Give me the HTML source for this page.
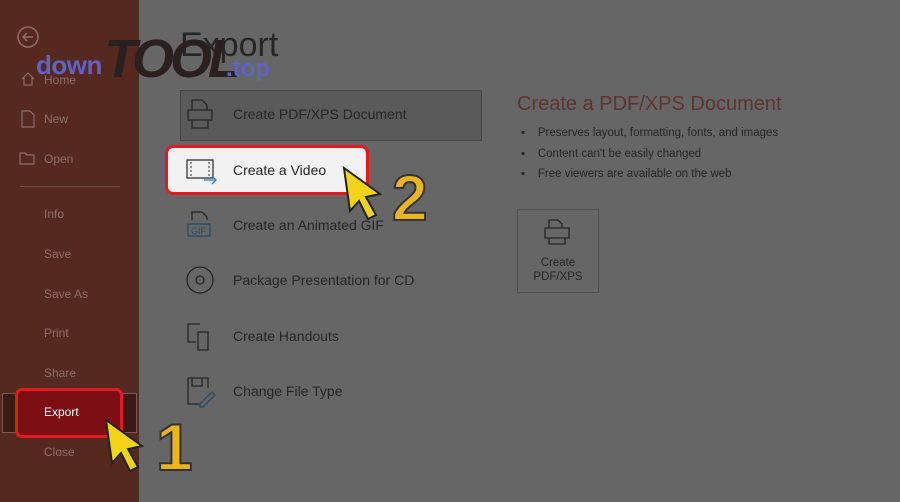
<!DOCTYPE html>
<html><head><meta charset="utf-8"><style>
*{margin:0;padding:0;box-sizing:border-box}
body{width:900px;height:502px;overflow:hidden;background:#666;font-family:"Liberation Sans",sans-serif;position:relative}
.side{position:absolute;left:0;top:0;width:139px;height:502px;background:#552920}
.si{position:absolute;left:44px;font-size:12px;color:#8f6e66}
.t{position:absolute;color:#262626;font-size:14px}
.ic{position:absolute}
</style></head><body>
<div class="side">
<svg class="ic" style="left:16px;top:25px" width="24" height="24"><circle cx="12" cy="12" r="10" fill="none" stroke="#8f6e66" stroke-width="1.5"/><path d="M17 12H7M11 8l-4 4 4 4" fill="none" stroke="#8f6e66" stroke-width="1.5"/></svg>
<svg class="ic" style="left:20px;top:71px" width="16" height="16"><path d="M2 8L8 2l6 6M4 6v8h8V6" fill="none" stroke="#8f6e66" stroke-width="1.2"/></svg>
<div class="si" style="top:73px">Home</div>
<svg class="ic" style="left:21px;top:110px" width="14" height="18"><path d="M1 1h8l4 4v12H1z" fill="none" stroke="#8f6e66" stroke-width="1.2"/></svg>
<div class="si" style="top:112px">New</div>
<svg class="ic" style="left:19px;top:151px" width="18" height="14"><path d="M1 2h5l2 2h7v9H1z" fill="none" stroke="#8f6e66" stroke-width="1.2"/></svg>
<div class="si" style="top:152px">Open</div>
<div style="position:absolute;left:20px;top:186px;width:100px;height:1px;background:#6e4a42"></div>
<div class="si" style="top:207px">Info</div>
<div class="si" style="top:247px">Save</div>
<div class="si" style="top:287px">Save As</div>
<div class="si" style="top:326px">Print</div>
<div class="si" style="top:366px">Share</div>
<div style="position:absolute;left:2px;top:393px;width:135px;height:40px;background:#3e1815;border:1px solid #7a5a55"></div>
<div style="position:absolute;left:15px;top:388px;width:108px;height:50px;background:#7d0f12;border:3px solid #e01b22;border-radius:7px"></div>
<div class="si" style="top:405px;color:#fff">Export</div>
<div class="si" style="top:445px">Close</div>
</div>
<div style="position:absolute;left:180px;top:26px;font-size:34px;color:#262626;font-weight:300">Export</div>
<div style="position:absolute;left:36px;top:50px;font-size:26px;font-weight:bold;color:#5e63c4;letter-spacing:-0.5px">down</div>
<div style="position:absolute;left:104px;top:28px;font-size:54px;font-weight:bold;font-style:italic;color:#2a2020;letter-spacing:-4px">TOOL</div>
<div style="position:absolute;left:226px;top:55px;font-size:24px;font-weight:bold;color:#5e63c4">.top</div>
<div style="position:absolute;left:180px;top:90px;width:302px;height:51px;background:#5a5a5a;border:1px solid #464646"></div>
<svg class="ic" style="left:186px;top:98px" width="30" height="34"><path d="M6 12V2h10l5 5v5M2 12h24v10H2zM6 22v8h16v-8" fill="none" stroke="#262626" stroke-width="1.3"/></svg>
<div class="t" style="left:233px;top:106px">Create PDF/XPS Document</div>
<div style="position:absolute;left:165px;top:145px;width:204px;height:50px;background:#f2f2f2;border:3px solid #e01b22;border-radius:8px"></div>
<svg class="ic" style="left:186px;top:158px" width="32" height="28"><rect x="1" y="2" width="26" height="18" fill="none" stroke="#333" stroke-width="1.3"/><path d="M5 4v14M23 4v14" stroke="#333" stroke-dasharray="2 2"/><path d="M18 22h12M26 18l4 4-4 4" fill="none" stroke="#3a7fc0" stroke-width="1.3"/></svg>
<div class="t" style="left:233px;top:162px">Create a Video</div>
<svg class="ic" style="left:186px;top:210px" width="28" height="32"><path d="M6 10V2h10l5 5v3" fill="none" stroke="#262626" stroke-width="1.3"/><rect x="2" y="14" width="22" height="12" fill="none" stroke="#2a4a6a" stroke-width="1.3"/><text x="5" y="24" font-size="9" fill="#2a4a6a" font-family="Liberation Sans">GIF</text></svg>
<div class="t" style="left:233px;top:217px">Create an Animated GIF</div>
<svg class="ic" style="left:186px;top:266px" width="30" height="30"><circle cx="14" cy="14" r="13" fill="none" stroke="#262626" stroke-width="1.3"/><circle cx="14" cy="14" r="4" fill="none" stroke="#262626" stroke-width="1.3"/></svg>
<div class="t" style="left:233px;top:272px">Package Presentation for CD</div>
<svg class="ic" style="left:186px;top:320px" width="30" height="32"><path d="M14 4H2v18h8M12 12h10v18H12z" fill="none" stroke="#262626" stroke-width="1.3"/></svg>
<div class="t" style="left:233px;top:328px">Create Handouts</div>
<svg class="ic" style="left:186px;top:376px" width="32" height="32"><path d="M2 2h20v10M2 2v26h12M6 2v8h10V2" fill="none" stroke="#262626" stroke-width="1.3"/><path d="M14 28l12-12 3 3-12 12h-3z" fill="none" stroke="#2a4a6a" stroke-width="1.3"/></svg>
<div class="t" style="left:233px;top:383px">Change File Type</div>
<div style="position:absolute;left:517px;top:93px;font-size:20px;color:#5e3430">Create a PDF/XPS Document</div>
<div style="position:absolute;left:521px;top:123px;font-size:11.5px;color:#262626;line-height:20.5px">
<div>▪&nbsp;&nbsp;&nbsp;&nbsp;Preserves layout, formatting, fonts, and images</div>
<div>▪&nbsp;&nbsp;&nbsp;&nbsp;Content can't be easily changed</div>
<div>▪&nbsp;&nbsp;&nbsp;&nbsp;Free viewers are available on the web</div></div>
<div style="position:absolute;left:517px;top:209px;width:82px;height:84px;border:1px solid #525252;text-align:center;font-size:11.5px;color:#262626;padding-top:46px;line-height:14px">Create<br>PDF/XPS</div>
<svg class="ic" style="left:543px;top:218px" width="30" height="30"><path d="M6 10V2h9l4 4v4M2 10h24v10H2zM6 20v6h16v-6" fill="none" stroke="#262626" stroke-width="1.3"/></svg>
<svg class="ic" style="left:98px;top:400px" width="100" height="80"><path d="M8 18l36 26-14 3 10 18-8 4-9-18-9 10z" fill="#f5d417" stroke="#222" stroke-width="2" transform="translate(0,2)"/><text x="58" y="70" font-size="66" font-weight="bold" fill="#f0b51c" stroke="#333" stroke-width="2" font-family="Liberation Sans">1</text></svg>
<svg class="ic" style="left:338px;top:160px" width="110" height="75"><path d="M6 8l36 26-14 3 10 18-8 4-9-18-9 10z" fill="#f5d417" stroke="#222" stroke-width="2"/><text x="54" y="60" font-size="64" font-weight="bold" fill="#f0b51c" stroke="#333" stroke-width="2" font-family="Liberation Sans">2</text></svg>
</body></html>
